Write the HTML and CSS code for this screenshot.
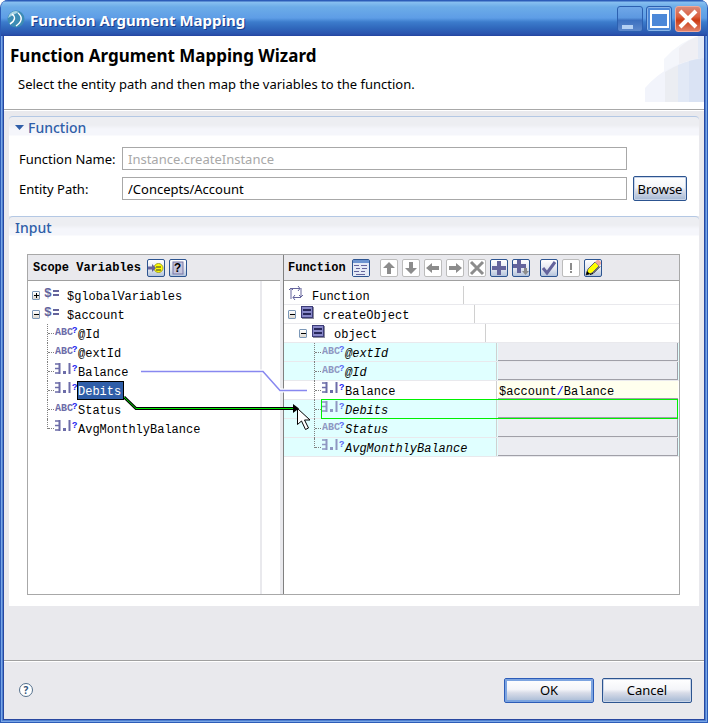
FILE: index.html
```
<!DOCTYPE html>
<html lang="en">
<head>
<meta charset="UTF-8" />
<meta name="viewport" content="width=device-width, initial-scale=1" />
<title>Function Argument Mapping</title>
<link rel="stylesheet" href="styles.css">
</head>
<body>

<!-- Icons shared by both trees -->
<svg class="defs" width="0" height="0" aria-hidden="true">
  <defs>
    <symbol id="i-string" viewBox="0 0 23 14">
      <text class="ic-abc" x="0" y="11">ABC</text>
      <text class="ic-q" x="17" y="9">?</text>
    </symbol>
    <symbol id="i-number" viewBox="0 0 23 14">
      <path d="M0 2h4M0 6.5h4M0 11h4" stroke="#6c6ca8" stroke-width="1.5" fill="none"/>
      <path d="M4.5 1v11M14.5 1v11" stroke="#6c6ca8" stroke-width="2"/>
      <rect x="8" y="9" width="3" height="3" fill="#6c6ca8"/>
      <text class="ic-q" x="17" y="9">?</text>
    </symbol>
    <symbol id="i-var" viewBox="0 0 23 14">
      <text class="ic-var" x="0" y="11">$</text>
      <path d="M9 5h6M9 9h6" stroke="#64649c" stroke-width="2"/>
    </symbol>
    <symbol id="i-element" viewBox="0 0 23 14">
      <rect x="2" y="2" width="12" height="12" fill="#8c8c9c"/>
      <rect x="1.5" y="1.5" width="11" height="11" fill="#8888c8" stroke="#3c3c78"/>
      <path d="M3 5h8M3 9h8" stroke="#28285c" stroke-width="2"/>
    </symbol>
  </defs>
</svg>

<div class="window">
  <header class="titlebar">
    <svg class="logo" width="18" height="18" viewBox="0 0 18 18">
      <circle cx="9" cy="9" r="8.5" fill="#3c8cb4"/>
      <path d="M1 8A8 8 0 0 1 9 1l3 1-6 3z" fill="#a8d4e4"/>
      <path d="M3 14C8 11 9 7 5 4M9 16c6-4 7-9 2-13" fill="none" stroke="#fff" stroke-width="1.5"/>
    </svg>
    <span class="caption">Function Argument Mapping</span>
    <button class="win-btn" aria-label="Minimize"><svg width="24" height="24" viewBox="0 0 24 24"><rect x="4" y="18" width="11" height="4" fill="#b4d0f4"/></svg></button>
    <button class="win-btn max" aria-label="Maximize"><svg width="24" height="24" viewBox="0 0 24 24"><path d="M4 5v15h17V5" fill="none" stroke="#fff" stroke-width="2"/><rect x="3" y="3" width="19" height="4" fill="#fff"/></svg></button>
    <button class="win-btn close" aria-label="Close"><svg width="24" height="24" viewBox="0 0 24 24"><path d="M4 4l16 16M20 4L4 20" stroke="#fff" stroke-width="4"/></svg></button>
  </header>

  <div class="banner">
    <div>
      <h1>Function Argument Mapping Wizard</h1>
      <p>Select the entity path and then map the variables to the function.</p>
    </div>
    <svg class="swoosh" width="59" height="66" viewBox="0 0 59 66">
      <path d="M19 66V23Q35 5 54 0h5v66z" fill="#f4f6fb"/>
      <path d="M34 66V12Q44 3 54 0h5v66z" fill="#efeff4"/>
      <path d="M53 66V0h6v66z" fill="#e2e9f6"/>
      <path d="M0 66V52Q22 26 59 22v44z" fill="#f2f4fb"/>
      <path d="M20 66V36Q37 25 59 22v44z" fill="#ebedf2"/>
      <path d="M33 66V29Q45 24 59 22v44z" fill="#e2e9f6"/>
      <path d="M44 66V25Q52 23 59 22v44z" fill="#dae3f4"/>
    </svg>
  </div>

  <main>
    <section class="section">
      <h2><svg width="9" height="5" viewBox="0 0 9 5"><path d="M0 0h9L4.500 5z" fill="#2f5ea8"/></svg>Function</h2>
      <form class="fields" id="function-form">
        <label for="function-name">Function Name:</label>
        <input type="text" id="function-name" value="Instance.createInstance" disabled />
        <label for="entity-path">Entity Path:</label>
        <input type="text" id="entity-path" value="/Concepts/Account" />
        <button type="button" class="btn">Browse</button>
      </form>
    </section>

    <section class="section input">
      <h2>Input</h2>
      <div class="mapper">
        <div class="scope">
          <div class="toolbar">
            <h3>Scope Variables</h3>
            <button class="tool" aria-label="Show types"><svg width="16" height="16" viewBox="0 0 16 16"><circle cx="10.500" cy="8" r="4.500" fill="#ff0" stroke="#9c9c30"/><path d="M0 8h5" stroke="#64649c" stroke-width="3"/><path d="M4 4l4 4-4 4z" fill="#64649c"/><path d="M8 7h5M8 10h5" stroke="#333"/></svg></button>
            <button class="tool" aria-label="Help"><svg width="16" height="16" viewBox="0 0 16 16"><rect x="3" y="2" width="10" height="12" fill="#c4c4dc" stroke="#7878a8"/><text class="ic-help" x="4" y="12">?</text></svg></button>
          </div>
          <ul class="tree">
            <li class="row"><span class="lead"><button class="toggle plus" aria-label="Expand"></button><svg><use href="#i-var"/></svg></span>$globalVariables</li>
            <li class="row"><span class="lead"><button class="toggle" aria-label="Collapse"></button><svg><use href="#i-var"/></svg></span>$account</li>
            <li class="row d1 leaf"><span class="lead"><svg><use href="#i-string"/></svg></span>@Id</li>
            <li class="row d1 leaf"><span class="lead"><svg><use href="#i-string"/></svg></span>@extId</li>
            <li class="row d1 leaf"><span class="lead"><svg><use href="#i-number"/></svg></span>Balance</li>
            <li class="row d1 leaf"><span class="lead"><svg><use href="#i-number"/></svg></span><span class="selected">Debits</span></li>
            <li class="row d1 leaf"><span class="lead"><svg><use href="#i-string"/></svg></span>Status</li>
            <li class="row d1 leaf last"><span class="lead"><svg><use href="#i-number"/></svg></span>AvgMonthlyBalance</li>
          </ul>
        </div>

        <div class="target">
          <div class="toolbar">
            <h3>Function</h3>
            <button class="tool" aria-label="Details"><svg width="16" height="16" viewBox="0 0 16 16"><rect width="16" height="16" fill="#e4eaf6"/><rect width="16" height="3" fill="#6c94d0"/><path d="M1 5.500h5M8 5.500h6M3 8.500h4M9 8.500h5M1 11.500h5M8 11.500h4M3 14.500h9" stroke="#64649c"/></svg></button>
            <button class="tool off first" aria-label="Move up"><svg width="16" height="16" viewBox="0 0 16 16"><path d="M8 2l6 6h-4v6H6V8H2z"/></svg></button>
            <button class="tool off" aria-label="Move down"><svg width="16" height="16" viewBox="0 0 16 16"><path d="M8 14l6-6h-4V2H6v6H2z"/></svg></button>
            <button class="tool off" aria-label="Move left"><svg width="16" height="16" viewBox="0 0 16 16"><path d="M1 8l6-5v3h7v4H7v3z"/></svg></button>
            <button class="tool off" aria-label="Move right"><svg width="16" height="16" viewBox="0 0 16 16"><path d="M15 8L9 3v3H2v4h7v3z"/></svg></button>
            <button class="tool off" aria-label="Delete"><svg width="16" height="16" viewBox="0 0 16 16"><path d="M2 2l12 12M14 2L2 14" stroke="#8c8c8c" stroke-width="3"/></svg></button>
            <button class="tool" aria-label="Add"><svg width="16" height="16" viewBox="0 0 16 16"><path d="M8 1v14M1 8h14" stroke="#64649c" stroke-width="4"/></svg></button>
            <button class="tool" aria-label="Add child"><svg width="16" height="16" viewBox="0 0 16 16"><path d="M6 0v13M0 6h13" stroke="#64649c" stroke-width="4"/><path d="M11 8h3v3h2l-3.500 4L9 11h2z" fill="#8c8c8c"/></svg></button>
            <button class="tool first" aria-label="Validate"><svg width="16" height="16" viewBox="0 0 16 16"><path d="M2 8l4 5 8-11" fill="none" stroke="#64649c" stroke-width="3"/></svg></button>
            <button class="tool off" aria-label="Errors"><svg width="16" height="16" viewBox="0 0 16 16"><path d="M7 3h2v7H7zM7 11h2v2H7z"/></svg></button>
            <button class="tool" aria-label="Edit"><svg width="16" height="16" viewBox="0 0 16 16"><path d="M1 15l2-6 7-7 4 4-7 7z" fill="#ff0" stroke="#666"/><path d="M10 2l2-2h2l2 2v2l-2 2z" fill="#f0a8a0"/><path d="M1 15l1-4 3 3z"/><path d="M5 14.500l3-1 7-7" fill="none" stroke="#000"/></svg></button>
          </div>
          <ul class="tree">
            <li class="row root"><span class="name"><span class="lead"><svg width="16" height="14" viewBox="0 0 16 14"><path d="M3 13V2M1 4l2-2 2 2M3 2.500h9M10 0l2 2.500L10 5M13 2v9M11 9l2 2 2-2M13 11.500H5M7 9l-2 2.500L7 14" fill="none" stroke="#64649c"/></svg></span>Function</span></li>
            <li class="row"><span class="name"><span class="lead"><button class="toggle" aria-label="Collapse"></button><svg><use href="#i-element"/></svg></span>createObject</span></li>
            <li class="row d1"><span class="name"><span class="lead"><button class="toggle" aria-label="Collapse"></button><svg><use href="#i-element"/></svg></span>object</span></li>
            <li class="row d2 leaf empty"><span class="name"><span class="lead"><svg><use href="#i-string"/></svg></span>@extId</span><span class="value"></span></li>
            <li class="row d2 leaf empty"><span class="name"><span class="lead"><svg><use href="#i-string"/></svg></span>@Id</span><span class="value"></span></li>
            <li class="row d2 leaf"><span class="name"><span class="lead"><svg><use href="#i-number"/></svg></span>Balance</span><span class="value">$account<b>/</b>Balance</span></li>
            <li class="row d2 leaf empty drop"><span class="name"><span class="lead"><svg><use href="#i-number"/></svg></span>Debits</span><span class="value"></span></li>
            <li class="row d2 leaf empty"><span class="name"><span class="lead"><svg><use href="#i-string"/></svg></span>Status</span><span class="value"></span></li>
            <li class="row d2 leaf empty last"><span class="name"><span class="lead"><svg><use href="#i-number"/></svg></span>AvgMonthlyBalance</span><span class="value"></span></li>
          </ul>
        </div>

        <!-- Mapping lines and the drag cursor -->
        <svg class="links" width="300" height="200" viewBox="0 0 300 200">
          <path d="M113 116.500h122l17 19h27" fill="none" stroke="#fff" stroke-width="4"/>
          <path d="M113 116.500h122l17 19h27" fill="none" stroke="#8888f0" stroke-width="1.500"/>
          <path d="M96 142l12 11.500h160" fill="none" stroke="#000" stroke-width="3"/>
          <path d="M96 142l12 11.500h158" fill="none" stroke="#00e800"/>
          <path d="M265 149l6 4.500-6 4.500z"/>
          <path d="M269.500 153.500v16l4-3.500 4 8.500 3-1.500-4-8h5.500z" fill="#fff" stroke="#000"/>
        </svg>
      </div>
    </section>
  </main>

  <footer>
    <button class="help" aria-label="Help">?</button>
    <button class="btn wide default">OK</button>
    <button class="btn wide">Cancel</button>
  </footer>
</div>

</body>
</html>
```
FILE: styles.css
```
* { box-sizing: border-box; }
body { margin: 0; font-family: "Noto Sans", sans-serif; font-size: 12px; color: #000; background: #fff; }
h1, h2, h3, p, ul { margin: 0; padding: 0; }
button { font-family: inherit; font-size: inherit; color: inherit; padding: 0; }
svg { display: block; flex: none; }
.defs { position: absolute; }

.window {
  display: flex; flex-direction: column; min-height: 100vh; background: #e9e9ed;
  border: 1px solid #2c5cb8; border-top: 0; border-radius: 8px 8px 0 0; overflow: hidden;
  box-shadow: inset 0 0 0 1px #7aa6e6, inset 0 0 0 2px #4f80d0, inset 0 0 0 3px #2848a0;
  padding: 0 3px 3px;
}

/* Title bar */
.titlebar {
  display: flex; align-items: center; gap: 3px; height: 36px; margin: 0 -3px; padding: 2px 6px 0 6px;
  background: linear-gradient(#2c5cb8 0, #2c5cb8 1px, #88c0f0 2px, #6cace8 7px, #5e9de6 18px, #3c7ccc 22px, #3068bc 28px, #2a54ae 34px, #2444a0 36px);
}
.caption { flex: 1; margin-left: 2px; padding-top: 2px; color: #fff; font-size: 15px; line-height: 20px; font-weight: bold; text-shadow: 1px 1px #1c3c8c; }
.win-btn {
  width: 26px; height: 26px; border: 1px solid #2c60b0; border-radius: 3px;
  background: linear-gradient(#70a8e8, #5c98e0 45%, #3c70c0 55%, #5c88cc);
}
.win-btn.max { background: #4c88d8; border-color: #2c60b0; box-shadow: inset 0 0 0 1px #88b4e8; }
.win-btn.close { background: linear-gradient(#d88878, #dc6040 40%, #cc3c14 55%, #e08068); border-color: #f0a898; }

/* Wizard banner */
.banner {
  display: flex; justify-content: space-between; min-height: 74px; background: #fff;
  border-bottom: 1px solid #a8a8a8;
}
.banner h1 { margin: 9px 0 0 6px; font-size: 17px; line-height: 22px; }
.banner p { margin: 7px 0 0 14px; font-size: 13px; line-height: 20px; }

main { flex: 1; padding: 5px 5px 54px; border-top: 1px solid #fff; }
.section {
  background: linear-gradient(#edeef2 0, #edeef2 8px, #f5f6fb 12px, #f5f6fb 18px, #fff 19px);
  border-top: 1px solid #b4c8e4; border-radius: 4px 4px 0 0; padding: 1px 12px 15px 10px;
}
.section h2 {
  display: flex; align-items: center; gap: 4px; height: 18px; margin-left: -4px;
  font-size: 14px; font-weight: 500; color: #2f5ea8;
}
.section.input { padding-bottom: 11px; }

.fields { display: grid; grid-template-columns: 97px 1fr 54px; column-gap: 6px; row-gap: 6px; align-items: center; padding-top: 11px; }
.fields label { grid-column: 1; font-size: 13px; white-space: nowrap; }
.fields input {
  width: 100%; height: 23px; border: 1px solid #a8a8a8; border-radius: 0; padding: 0 5px;
  background: #fff; font-family: inherit; font-size: 13px; color: #000;
}
.fields input:disabled { color: #a8a8a8; }

.btn {
  height: 25px; border: 1px solid #2c5490; border-radius: 2px; font-size: 13px;
  background: linear-gradient(#fff, #f4f5f9 45%, #d8dce8 60%, #a4b8d4);
  box-shadow: inset 0 0 0 1px #c8d4e8;
}
.btn.wide { width: 90px; }
.btn.default { border-color: #2c5cb8; box-shadow: inset 0 0 0 2px #7ca4e0; }

/* Mapper */
.mapper {
  position: relative; display: grid; grid-template-columns: 252px 1fr; column-gap: 3px;
  min-height: 341px; margin: 18px 7px 0 8px; background: #e9e9ed; border: 1px solid #a8a8a8;
  font-family: "Liberation Mono", monospace;
}
.scope {
  background: linear-gradient(to right, #fff 232px, #e9e9ed 232px, #e9e9ed 234px, #fff 234px);
}
.target { background: #fff; border-left: 1px solid #808080; min-width: 0; }
.toolbar {
  display: flex; align-items: center; gap: 4px; height: 26px; padding-left: 5px;
  background: #e9e9ed; border-bottom: 1px solid #a0a0a0;
}
.target .toolbar { padding-left: 4px; }
.toolbar h3 { margin-right: 2px; font-size: 12px; }
.tool {
  flex: none; width: 18px; height: 18px; border: 1px solid #2c5490; border-radius: 2px;
  background: linear-gradient(#fff, #dfe4ee 60%, #b4c4dc);
}
.tool.off { border-color: #bcbcbc; background: #fff; fill: #8c8c8c; }
.tool.first { margin-left: 6px; }

.tree { list-style: none; padding-top: 5px; font-size: 12px; }
.row { position: relative; display: flex; height: 19px; line-height: 15px; padding-top: 4px; white-space: nowrap; }
.row.d1 { padding-left: 11px; }
.row.d2 { padding-left: 22px; }
.lead { position: relative; flex: none; display: flex; gap: 4px; width: 39px; height: 19px; margin-top: -4px; padding-left: 4px; }
.lead svg { width: 23px; height: 14px; }
.root .lead { width: 28px; }
.root .lead svg { width: 16px; }
.leaf .lead { padding-left: 16px; }
.leaf .lead::before { content: ""; position: absolute; left: 8px; top: 0; bottom: 0; border-left: 1px dotted #808080; }
.leaf.last .lead::before { bottom: 9px; }
.leaf .lead::after { content: ""; position: absolute; left: 9px; top: 9px; width: 6px; border-top: 1px dotted #808080; }
.toggle {
  width: 9px; height: 9px; margin-top: 5px; border: 1px solid #7c98b8; border-radius: 1px;
  background: linear-gradient(#000, #000) center / 5px 1px no-repeat, linear-gradient(#fff, #dcd8d0);
}
.toggle.plus {
  background: linear-gradient(#000, #000) center / 5px 1px no-repeat, linear-gradient(#000, #000) center / 1px 5px no-repeat, linear-gradient(#fff, #dcd8d0);
}
.selected { margin: -4px 0 0 -1px; height: 19px; padding: 4px 3px 0 1px; background: #2f5ea8; color: #fff; outline: 1px solid #000; outline-offset: -1px; }

.target .row { border-bottom: 1px solid #e9e9ed; }
.name { flex: none; display: flex; width: 191px; margin-top: -4px; padding-top: 4px; border-right: 1px solid #d0d0d0; }
.root .name { width: 180px; }
.target .leaf .value {
  flex: 1; height: 18px; margin: -4px 1px 0 1px; padding: 4px 0 0 1px;
  background: #ffffee; border-bottom: 1px solid #a0a0a8;
}
.value b { font-weight: normal; color: #00f; }
.target .empty { background: #e0ffff; font-style: italic; }
.target .empty .value { background: #ecedf2; border-right: 1px solid #a0a0a8; }
.empty .lead svg { opacity: 0.7; }
.drop::after { content: ""; position: absolute; left: 37px; right: 1px; top: -1px; bottom: -1px; border: 1px solid #00f000; }

.links { position: absolute; left: 0; top: 0; pointer-events: none; }

.ic-abc { font: bold 10px "Liberation Mono", monospace; fill: #6c6ca8; }
.ic-q { font: bold 9px "Liberation Mono", monospace; fill: #2424f0; }
.ic-var { font: bold 13px "Liberation Mono", monospace; fill: #64649c; }
.ic-help { font: bold 12px "Liberation Mono", monospace; fill: #000; }

/* Footer */
footer {
  display: flex; align-items: center; gap: 8px; min-height: 59px; padding: 0 12px 0 15px;
  border-top: 1px solid #a0a0a0; box-shadow: inset 0 1px #fff;
}
.help {
  width: 14px; height: 14px; margin-right: auto; border: 1px solid #54708c; border-radius: 50%;
  background: #fff; color: #34547c; font-size: 10px; line-height: 12px; font-weight: bold;
}
```
